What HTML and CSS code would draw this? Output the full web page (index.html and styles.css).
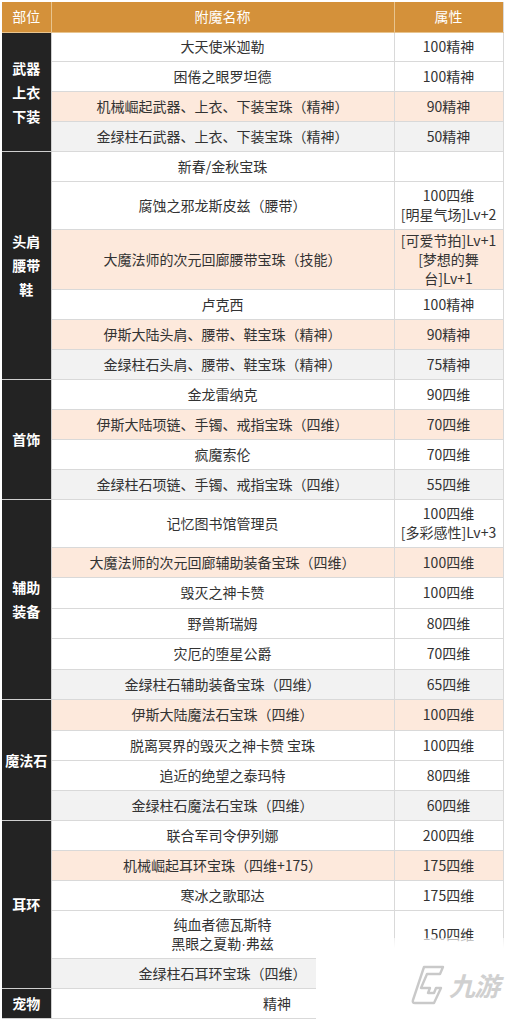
FILE: index.html
```html
<!DOCTYPE html>
<html lang="zh-CN">
<head>
<meta charset="utf-8">
<title>附魔表</title>
<link rel="stylesheet" href="styles.css">
</head>
<body>
<table class="enchant">
  <colgroup>
    <col class="c1"><col class="c2"><col class="c3">
  </colgroup>
  <thead>
    <tr class="h30"><th>部位</th><th>附魔名称</th><th>属性</th></tr>
  </thead>
  <tbody>
    <tr class="h29"><td class="cat" rowspan="4">武器<br>上衣<br>下装</td><td>大天使米迦勒</td><td>100精神</td></tr>
    <tr class="h30"><td>困倦之眼罗坦德</td><td>100精神</td></tr>
    <tr class="h30 peach"><td>机械崛起武器、上衣、下装宝珠（精神）</td><td>90精神</td></tr>
    <tr class="h30 gray"><td>金绿柱石武器、上衣、下装宝珠（精神）</td><td>50精神</td></tr>

    <tr class="h30"><td class="cat" rowspan="6">头肩<br>腰带<br>鞋</td><td>新春/金秋宝珠</td><td></td></tr>
    <tr class="h48"><td>腐蚀之邪龙斯皮兹（腰带）</td><td>100四维<br>[明星气场]Lv+2</td></tr>
    <tr class="h60 peach"><td>大魔法师的次元回廊腰带宝珠（技能）</td><td>[可爱节拍]Lv+1<br>[梦想的舞<br>台]Lv+1</td></tr>
    <tr class="h30"><td>卢克西</td><td>100精神</td></tr>
    <tr class="h30 peach"><td>伊斯大陆头肩、腰带、鞋宝珠（精神）</td><td>90精神</td></tr>
    <tr class="h30 gray"><td>金绿柱石头肩、腰带、鞋宝珠（精神）</td><td>75精神</td></tr>

    <tr class="h30"><td class="cat" rowspan="4">首饰</td><td>金龙雷纳克</td><td>90四维</td></tr>
    <tr class="h30 peach"><td>伊斯大陆项链、手镯、戒指宝珠（四维）</td><td>70四维</td></tr>
    <tr class="h30"><td>疯魔索伦</td><td>70四维</td></tr>
    <tr class="h30 gray"><td>金绿柱石项链、手镯、戒指宝珠（四维）</td><td>55四维</td></tr>

    <tr class="h48"><td class="cat" rowspan="6">辅助<br>装备</td><td>记忆图书馆管理员</td><td>100四维<br>[多彩感性]Lv+3</td></tr>
    <tr class="h30 peach"><td>大魔法师的次元回廊辅助装备宝珠（四维）</td><td>100四维</td></tr>
    <tr class="h31"><td>毁灭之神卡赞</td><td>100四维</td></tr>
    <tr class="h30"><td>野兽斯瑞姆</td><td>80四维</td></tr>
    <tr class="h31"><td>灾厄的堕星公爵</td><td>70四维</td></tr>
    <tr class="h30 gray"><td>金绿柱石辅助装备宝珠（四维）</td><td>65四维</td></tr>

    <tr class="h31 peach"><td class="cat" rowspan="4">魔法石</td><td>伊斯大陆魔法石宝珠（四维）</td><td>100四维</td></tr>
    <tr class="h30"><td>脱离冥界的毁灭之神卡赞 宝珠</td><td>100四维</td></tr>
    <tr class="h30"><td>追近的绝望之泰玛特</td><td>80四维</td></tr>
    <tr class="h30 gray"><td>金绿柱石魔法石宝珠（四维）</td><td>60四维</td></tr>

    <tr class="h30"><td class="cat" rowspan="5">耳环</td><td>联合军司令伊列娜</td><td>200四维</td></tr>
    <tr class="h30 peach"><td>机械崛起耳环宝珠（四维+175）</td><td>175四维</td></tr>
    <tr class="h30"><td>寒冰之歌耶达</td><td>175四维</td></tr>
    <tr class="h48"><td>纯血者德瓦斯特<br>黑眼之夏勒<span class="dot">·</span>弗兹</td><td>150四维</td></tr>
    <tr class="h30 gray"><td>金绿柱石耳环宝珠（四维）</td><td></td></tr>

    <tr class="h30"><td class="cat">宠物</td><td colspan="2">精神</td></tr>
  </tbody>
</table>

<div class="watermark">
  <svg class="wm-mark" width="36" height="42" viewBox="0 0 36 42">
    <path d="M14 3 L33 3 L30 10 L17 10 L11 24 L20 24 L18 29 L24 29 L26 24 L31 24 L24 39 L5 39 Q2 39 3 36 L13 6 Q14 3 14 3 Z" fill="none" stroke="#c9c9c9" stroke-width="2.4" stroke-linejoin="round"/>
  </svg>
  <span class="wm-text">九游</span>
</div>
</body>
</html>
```
FILE: styles.css
```css
html, body {
  margin: 0;
  background: #ffffff;
}

body {
  padding: 2px 0 0 2px;
  font-family: "Noto Sans CJK SC", "Microsoft YaHei", sans-serif;
  position: relative;
  height: 1020px;
  box-sizing: border-box;
  overflow: hidden;
}

.enchant {
  border-collapse: collapse;
  table-layout: fixed;
  width: 501px;
  font-size: 14px;
  color: #333333;
}

.c1 { width: 49px; }
.c2 { width: 343px; }
.c3 { width: 109px; }

.enchant th,
.enchant td {
  border: 1px solid #d9d9d9;
  padding: 0 3px;
  text-align: center;
  vertical-align: middle;
  line-height: 19px;
  white-space: nowrap;
}

.enchant th {
  background: #d4913a;
  color: #ffffff;
  font-weight: normal;
  border-color: #e8c48e;
  border-top: 0;
}

.enchant th:first-child { border-left: 0; }
.enchant th:last-child { border-right-color: #d9d9d9; }

.enchant td.cat {
  background: #232323;
  color: #ffffff;
  font-weight: bold;
  line-height: 24px;
  border-left: 0;
  border-color: #cfcfcf;
  padding: 0;
}

.dot {
  font-family: "Liberation Sans", sans-serif;
}

.h29 { height: 29px; }
.h30 { height: 30px; }
.h31 { height: 31px; }
.h48 { height: 48px; }
.h60 { height: 60px; }

.peach td { background: #fde9dc; }
.gray td { background: #f2f2f2; }

.watermark {
  position: absolute;
  left: 316px;
  top: 938px;
  width: 190px;
  height: 82px;
  background: linear-gradient(to bottom, rgba(255,255,255,0.6) 0px, #ffffff 10px, #ffffff 100%);
  display: flex;
  align-items: center;
  justify-content: flex-end;
  padding-right: 7px;
  padding-top: 12px;
  box-sizing: border-box;
  gap: 3px;
}

.wm-mark {
  display: block;
}

.wm-text {
  font-family: "Noto Sans CJK SC", sans-serif;
  font-size: 26px;
  font-style: italic;
  font-weight: bold;
  color: #d0d0d0;
  letter-spacing: -1px;
  line-height: 1;
}
```
